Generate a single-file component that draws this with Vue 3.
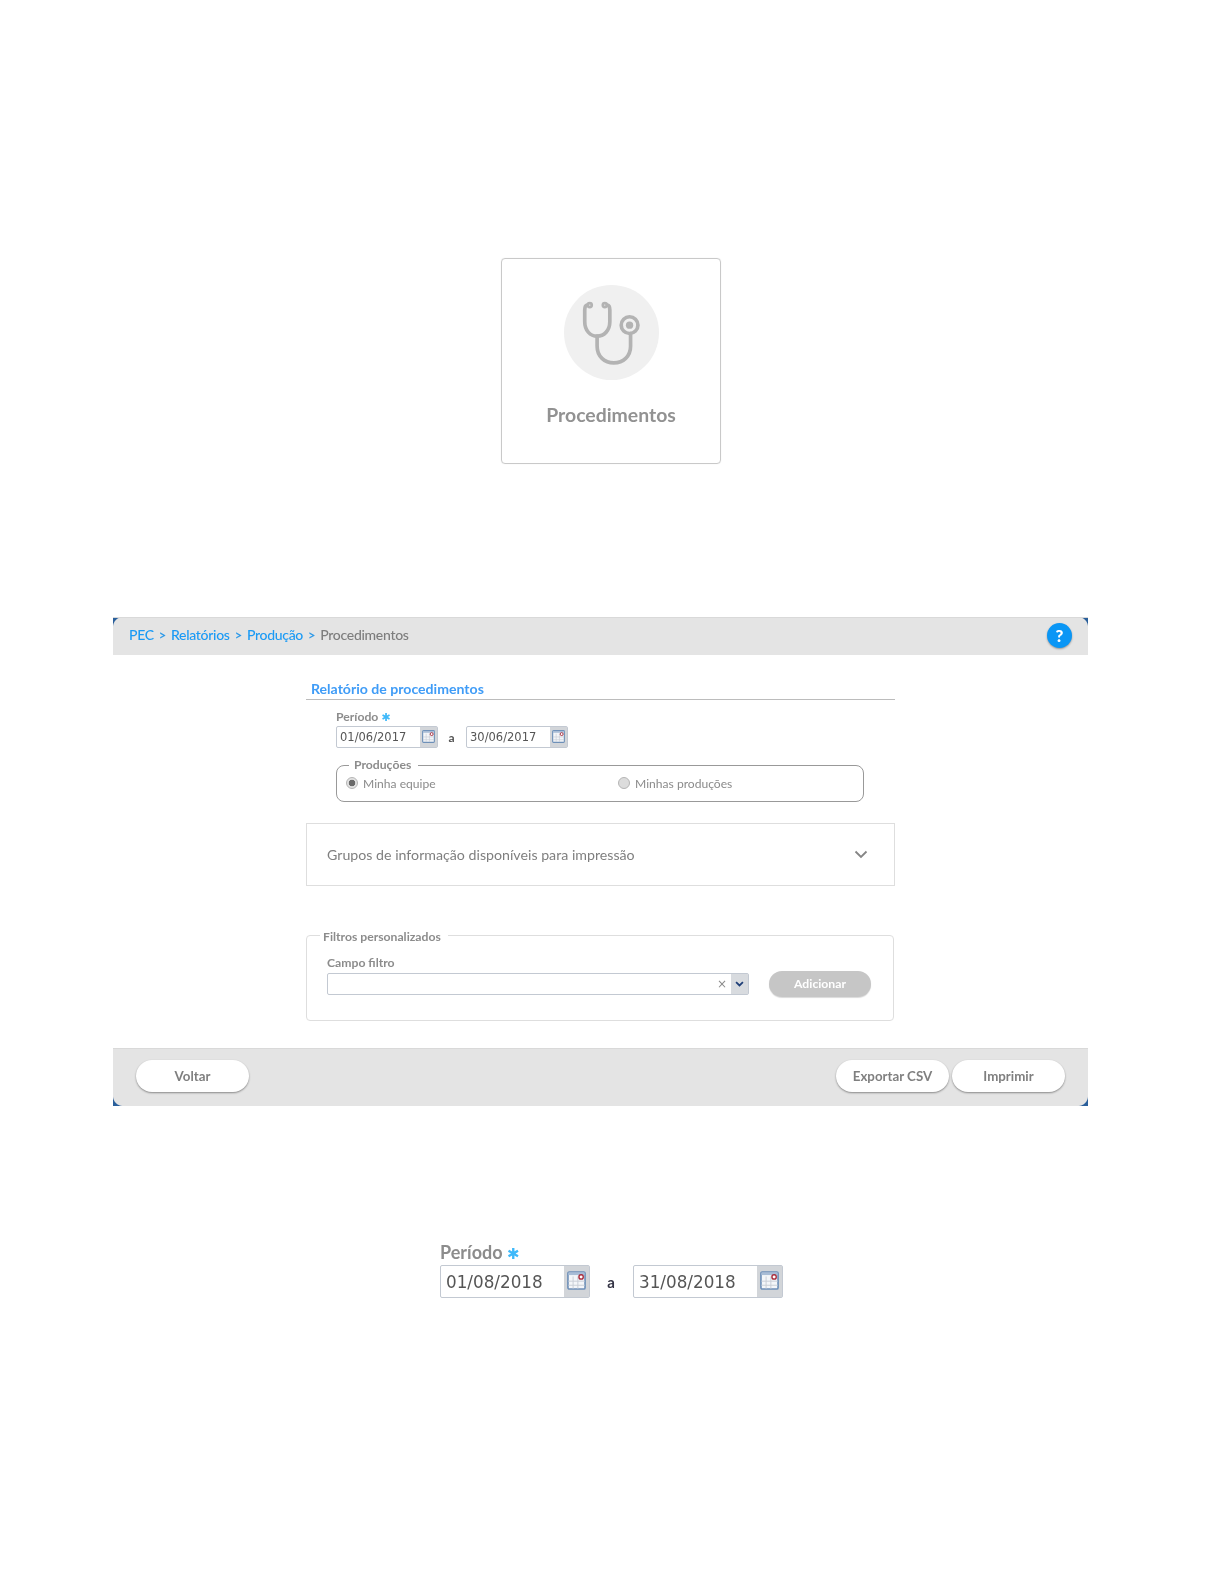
<script setup>
const crumbs = ['PEC', 'Relatórios', 'Produção']
const smallDates = ['01/06/2017', '30/06/2017']
const largeDates = ['01/08/2018', '31/08/2018']
</script>

<template>
  <div class="page">
    <section class="card">
      <div class="badge">
        <svg class="steth" viewBox="221 105 284 284" fill="none" stroke="#b3b3b3" stroke-width="11" stroke-linecap="round">
          <path d="M290 165 C284 166 283 172 283 180 V215 C283 242 300 258 320 258 C340 258 358 242 358 215 V180 C358 172 357 166 351 165" />
          <circle cx="298" cy="165" r="6" stroke-width="8" />
          <circle cx="343" cy="165" r="6" stroke-width="8" />
          <path d="M320 258 V288 C320 318 342 338 370 338 C398 338 420 318 420 288 V250" />
          <circle cx="417" cy="225" r="25" />
          <circle cx="417" cy="225" r="11" fill="#b3b3b3" stroke="none" />
        </svg>
      </div>
      <h2 class="card-title">Procedimentos</h2>
    </section>

    <section class="panel">
      <header class="bar top-bar">
        <nav class="crumbs">
          <template v-for="c in crumbs" :key="c">
            <a class="crumb">{{ c }}</a><span class="sep">&gt;</span>
          </template>
          <span class="crumb-current">Procedimentos</span>
        </nav>
        <span class="help">?</span>
      </header>

      <div class="content">
        <h3 class="heading">Relatório de procedimentos</h3>

        <div class="period">
          <div class="period-label">Período <span class="req">✱</span></div>
          <div class="period-row">
            <template v-for="(d, i) in smallDates" :key="d">
              <span v-if="i" class="to">a</span>
              <div class="date">
                <span class="date-value">{{ d }}</span>
                <span class="date-btn">
                  <svg class="cal" viewBox="0 0 14 14">
                    <rect x="0.7" y="0.7" width="12.6" height="12.6" rx="1" fill="#f4f6f9" stroke="#6d8fb8" stroke-width="1.2" />
                    <rect x="1" y="1" width="12" height="2" fill="#a9bdd6" />
                    <path d="M4.5 4V13M8 4V13M1 7.5H13M1 10.5H13" stroke="#c8ced6" stroke-width=".7" />
                    <circle cx="10.4" cy="4.4" r="1.6" fill="#fff" stroke="#a82a3a" stroke-width="1" />
                  </svg>
                </span>
              </div>
            </template>
          </div>
        </div>

        <fieldset class="prod">
          <legend>Produções</legend>
          <label class="radio radio-first"><span class="dot on"></span>Minha equipe</label>
          <label class="radio"><span class="dot"></span>Minhas produções</label>
        </fieldset>

        <div class="accordion">
          <span>Grupos de informação disponíveis para impressão</span>
          <svg class="chev" viewBox="0 0 14 9" fill="none" stroke="#858585" stroke-width="1.8"><path d="M1.5 1.5L7 7L12.5 1.5" /></svg>
        </div>

        <fieldset class="filters">
          <legend>Filtros personalizados</legend>
          <div class="filter-row">
            <div class="filter-field">
              <div class="filter-label">Campo filtro</div>
              <div class="combo">
                <span class="clear">×</span>
                <span class="combo-btn">
                  <svg viewBox="0 0 10 7" width="9" height="6" fill="none" stroke="#1f3f78" stroke-width="2"><path d="M1 1.2L5 5.2L9 1.2" /></svg>
                </span>
              </div>
            </div>
            <button class="add" type="button">Adicionar</button>
          </div>
        </fieldset>
      </div>

      <footer class="bar bottom-bar">
        <button class="pill" type="button">Voltar</button>
        <div class="actions">
          <button class="pill" type="button">Exportar CSV</button>
          <button class="pill" type="button">Imprimir</button>
        </div>
      </footer>
    </section>

    <section class="period large">
      <div class="period-label">Período <span class="req">✱</span></div>
      <div class="period-row">
        <template v-for="(d, i) in largeDates" :key="d">
          <span v-if="i" class="to">a</span>
          <div class="date">
            <span class="date-value">{{ d }}</span>
            <span class="date-btn">
              <svg class="cal" viewBox="0 0 14 14">
                <rect x="0.7" y="0.7" width="12.6" height="12.6" rx="1" fill="#f4f6f9" stroke="#6d8fb8" stroke-width="1.2" />
                <rect x="1" y="1" width="12" height="2" fill="#a9bdd6" />
                <path d="M4.5 4V13M8 4V13M1 7.5H13M1 10.5H13" stroke="#c8ced6" stroke-width=".7" />
                <circle cx="10.4" cy="4.4" r="1.6" fill="#fff" stroke="#a82a3a" stroke-width="1" />
              </svg>
            </span>
          </div>
        </template>
      </div>
    </section>
  </div>
</template>

<style scoped>
.page {
  width: 1224px;
  height: 1584px;
  box-sizing: border-box;
  padding-top: 258px;
  background: #fff;
  font-family: Lato, "Liberation Sans", sans-serif;
  color: #858585;
  overflow: hidden;
  filter: blur(0.35px);
}
.card {
  width: 220px;
  height: 206px;
  box-sizing: border-box;
  margin-left: 501px;
  border: 1px solid #c9c9c9;
  border-radius: 4px;
  box-shadow: 0 0 1px #ddd;
  display: flex;
  flex-direction: column;
  align-items: center;
  padding-top: 26px;
}
.badge {
  width: 95px;
  height: 95px;
  border-radius: 50%;
  background: #f0f0f0;
}
.steth { width: 95px; height: 95px; display: block; }
.card-title {
  margin: 15px 0 0;
  font-size: 19.4px;
  line-height: 40px;
  height: 40px;
  font-weight: 700;
  color: #929292;
}
.panel { width: 975px; margin: 153px 0 0 113px; }
.bar {
  background-color: #e4e4e4;
  border: solid #d9d9d9;
  box-sizing: border-box;
  display: flex;
  align-items: center;
  justify-content: space-between;
}
.top-bar {
  height: 38px;
  border-width: 1px 0 0;
  padding: 0 16px 2px;
  background-image:
    radial-gradient(circle at 100% 100%, #e4e4e4 9.5px, #2a5f9b 10.5px),
    radial-gradient(circle at 0 100%, #e4e4e4 9.5px, #2a5f9b 10.5px);
  background-size: 10px 10px;
  background-position: 0 -1px, 100% -1px;
  background-repeat: no-repeat;
}
.bottom-bar {
  height: 58px;
  border-width: 1px 0 0;
  padding: 0 23px 4px;
  margin-top: 27px;
  background-image:
    radial-gradient(circle at 100% 0, #e4e4e4 9.5px, #2a5f9b 10.5px),
    radial-gradient(circle at 0 0, #e4e4e4 9.5px, #2a5f9b 10.5px);
  background-size: 10px 10px;
  background-position: 0 100%, 100% 100%;
  background-repeat: no-repeat;
}
.crumbs { font-size: 14px; letter-spacing: -0.3px; display: flex; align-items: center; font-weight: 500; margin-bottom: 2px; }
.crumb { color: #1a9af5; }
.sep { color: #2f9ae8; margin: 0 5px; font-size: 13px; font-weight: 700; }
.crumb-current { color: #7d7d7d; }
.help {
  width: 25px;
  height: 25px;
  border-radius: 50%;
  background: #0a96f5;
  color: #fff;
  font-weight: 900;
  font-size: 17px;
  line-height: 25px;
  text-align: center;
  box-shadow: 0 1px 2px rgba(0, 0, 0, .35);
}
.content { width: 589px; margin-left: 193px; }
.heading {
  margin: 24px 0 0;
  padding-left: 5px;
  height: 20px;
  line-height: 20px;
  font-size: 14.1px;
  font-weight: 700;
  color: #3f9cf7;
  border-bottom: 1px solid #bcbcbc;
  box-sizing: content-box;
}
.period { margin: 10px 0 0 30px; }
.period-label {
  height: 16px;
  line-height: 14px;
  font-size: 12.2px;
  font-weight: 700;
  color: #8c8c8c;
}
.req { color: #3fb9fa; font-family: "DejaVu Sans", sans-serif; font-size: 11px; }
.period-row { display: flex; align-items: center; }
.date {
  width: 102px;
  height: 22px;
  box-sizing: border-box;
  border: 1px solid #c3c9d2;
  border-radius: 2px;
  display: flex;
  align-items: stretch;
  background: #fff;
}
.date-value {
  flex: 1;
  padding-left: 3px;
  font-family: "DejaVu Sans", sans-serif;
  font-size: 11.5px;
  line-height: 20px;
  color: #555;
}
.date-btn {
  width: 17px;
  background: #d2d5d9;
  display: flex;
  align-items: center;
  justify-content: center;
}
.cal { width: 13px; height: 13px; margin-top: -2px; }
.to {
  width: 28px;
  box-sizing: border-box;
  padding-right: 1px;
  text-align: center;
  font-size: 12px;
  font-weight: 700;
  color: #555;
}
.prod {
  margin: 9px 0 0 30px;
  width: 528px;
  height: 45px;
  box-sizing: border-box;
  border: 1px solid #999;
  border-radius: 8px;
  padding: 0 0 8px 9px;
  display: flex;
  align-items: center;
}
.prod legend {
  margin-left: 3px;
  padding: 0 7px 0 5px;
  font-size: 12.2px;
  line-height: 16px;
  font-weight: 700;
  color: #8c8c8c;
}
.radio {
  display: flex;
  align-items: center;
  gap: 5px;
  font-size: 12.1px;
  color: #8b8b8b;
}
.radio-first { width: 272px; }
.dot {
  width: 12px;
  height: 12px;
  box-sizing: border-box;
  border-radius: 50%;
  border: 1px solid #b5b5b5;
  background: #dcdcdc;
  display: block;
}
.dot.on {
  background: radial-gradient(circle, #6a6a6a 0 3px, #e2e2e2 3.6px);
}
.accordion {
  margin-top: 21px;
  height: 63px;
  box-sizing: border-box;
  border: 1px solid #dedede;
  padding: 0 26px 0 20px;
  display: flex;
  align-items: center;
  justify-content: space-between;
  font-size: 14.2px;
  color: #7f7f7f;
}
.chev { width: 14px; height: 9px; margin-top: -1px; }
.filters {
  margin: 39px 0 0;
  width: 588px;
  height: 96px;
  box-sizing: border-box;
  border: 1px solid #dedede;
  border-radius: 4px;
  padding: 0 22px 0 20px;
}
.filters legend {
  margin-left: -7px;
  padding: 4px 7px 0 3px;
  font-size: 12.2px;
  line-height: 16px;
  font-weight: 700;
  color: #8c8c8c;
}
.filter-row { display: flex; align-items: flex-end; justify-content: space-between; margin-top: 10px; }
.filter-field { width: 422px; }
.filter-label {
  font-size: 12.2px;
  line-height: 16px;
  font-weight: 700;
  color: #8c8c8c;
  margin-bottom: 2px;
}
.combo {
  height: 22px;
  box-sizing: border-box;
  border: 1px solid #c3c9d2;
  border-radius: 2px;
  display: flex;
  justify-content: flex-end;
  align-items: stretch;
}
.clear { font-size: 12px; line-height: 20px; color: #8c8c8c; margin-right: 4px; font-family: "DejaVu Sans", sans-serif; }
.combo-btn {
  width: 17px;
  background: #d8dbdf;
  display: flex;
  align-items: center;
  justify-content: center;
}
.add {
  width: 102px;
  height: 26px;
  margin-bottom: -2px;
  padding: 0 0 2px;
  border: 0;
  border-radius: 13px;
  background: #c6c6c6;
  color: #fff;
  font: 700 12.2px Lato, sans-serif;
  box-shadow: 0 1px 1px rgba(0, 0, 0, .15);
}
.actions { display: flex; gap: 3px; }
.pill {
  width: 113px;
  height: 32px;
  border: 0;
  border-radius: 16px;
  background: #fff;
  color: #7f7f7f;
  font: 700 13.3px Lato, sans-serif;
  box-shadow: 0 1px 2px rgba(0, 0, 0, .4);
}
.large { margin: 137px 0 0 440px; }
.large .period-label { height: 22px; line-height: 18px; font-size: 18px; }
.large .req { font-size: 15px; }
.large .date { width: 150px; height: 33px; }
.large .date-value { font-size: 16.8px; line-height: 33px; padding-left: 5px; }
.large .date-btn { width: 25px; }
.large .cal { width: 19px; height: 19px; }
.large .to { width: 43px; font-size: 15px; color: #334; }
</style>
